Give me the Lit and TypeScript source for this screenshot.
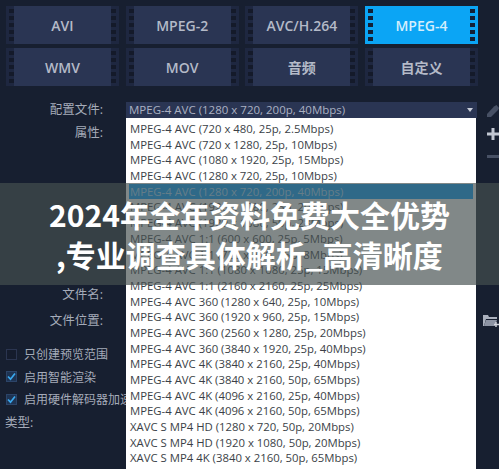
import { LitElement, html, css, svg } from "lit";
import { customElement } from "lit/decorators.js";

const TABS = ["AVI", "MPEG-2", "AVC/H.264", "MPEG-4", "WMV", "MOV", "音频", "自定义"];
const OPTIONS = [
  "MPEG-4 AVC (720 x 480, 25p, 2.5Mbps)",
  "MPEG-4 AVC (720 x 1280, 25p, 10Mbps)",
  "MPEG-4 AVC (1080 x 1920, 25p, 15Mbps)",
  "MPEG-4 AVC (1280 x 720, 25p, 10Mbps)",
  "MPEG-4 AVC (1280 x 720, 200p, 40Mbps)",
  "MPEG-4 AVC (1920 x 1080, 25p, 20Mbps)",
  "MPEG-4 AVC (1920 x 1080, 50p, 28Mbps)",
  "MPEG-4 AVC 1:1 (600 x 600, 25p, 5Mbps)",
  "MPEG-4 AVC 1:1 (720 x 720, 25p, 8Mbps)",
  "MPEG-4 AVC 1:1 (1080 x 1080, 25p, 15Mbps)",
  "MPEG-4 AVC 1:1 (2160 x 2160, 25p, 25Mbps)",
  "MPEG-4 AVC 360 (1280 x 640, 25p, 10Mbps)",
  "MPEG-4 AVC 360 (1920 x 960, 25p, 15Mbps)",
  "MPEG-4 AVC 360 (2560 x 1280, 25p, 20Mbps)",
  "MPEG-4 AVC 360 (3840 x 1920, 25p, 40Mbps)",
  "MPEG-4 AVC 4K (3840 x 2160, 25p, 40Mbps)",
  "MPEG-4 AVC 4K (3840 x 2160, 50p, 65Mbps)",
  "MPEG-4 AVC 4K (4096 x 2160, 25p, 40Mbps)",
  "MPEG-4 AVC 4K (4096 x 2160, 50p, 65Mbps)",
  "XAVC S MP4 HD (1280 x 720, 50p, 20Mbps)",
  "XAVC S MP4 HD (1920 x 1080, 50p, 20Mbps)",
  "XAVC S MP4 4K (3840 x 2160, 50p, 65Mbps)",
];
const CHECKS: [string, boolean][] = [
  ["只创建预览范围", false],
  ["启用智能渲染", true],
  ["启用硬件解码器加速", true],
];

@customElement("app-root")
export class AppRoot extends LitElement {
  static styles = css`
    :host {
      display: block;
      width: 499px;
      height: 469px;
      overflow: hidden;
      position: relative;
      background: #171f30;
      font-family: "Open Sans", "Noto Sans CJK SC", sans-serif;
      color: #b9bfcb;
    }
    .tabs {
      display: grid;
      grid-template-columns: repeat(4, 113px);
      grid-auto-rows: 38px;
      column-gap: 6.67px;
      row-gap: 4px;
      padding: 6px 0 0 6px;
    }
    .tab {
      display: flex;
      align-items: center;
      justify-content: center;
      background: #2a3553;
      color: #b4bac8;
      font-size: 14px;
      font-weight: 600;
      position: relative;
    }
    .tab.on { background: #0ba5f5; color: #d4eefc; }
    .perf {
      position: absolute;
      top: 0;
      bottom: 0;
      width: 8px;
      background-color: #1e2740;
      background-image: repeating-linear-gradient(transparent 0 3px, #141a2a 3px 7px);
      background-size: 5px 100%;
      background-repeat: no-repeat;
    }
    .tab.on .perf {
      background-color: #0ba5f5;
      background-image: repeating-linear-gradient(transparent 0 3px, #132036 3px 7px);
    }
    .perf.l { left: 0; background-position: 3px 0; }
    .perf.r { right: 0; background-position: 0 0; }
    .body {
      display: grid;
      grid-template-columns: 126px 351px 22px;
      padding-top: 16px;
    }
    .left { display: flex; flex-direction: column; }
    .lab {
      font-size: 12.5px;
      text-align: right;
      padding-right: 23px;
      height: 22px;
      line-height: 22px;
      color: #a5abb9;
    }
    .lab.first { margin-top: -3px; }
    .lab.attr { margin-top: 1px; }
    .lab.name { margin-top: 140px; }
    .lab.loc { margin-top: 4px; }
    .checks { display: flex; flex-direction: column; gap: 5.5px; margin-top: 13.5px; padding-left: 6px; }
    .check { display: flex; align-items: center; gap: 7px; height: 17px; font-size: 12px; white-space: nowrap; color: #a5abb9; }
    .box {
      flex: none;
      width: 9px;
      height: 9px;
      border: 1px solid #2b3550;
      background: #151c2d;
      display: flex;
      align-items: center;
      justify-content: center;
    }
    .box.on { background: #1e3352; border-color: #2c4468; }
    .box svg { display: block; }
    .type { font-size: 12.5px; color: #a5abb9; padding: 6px 0 0 5px; line-height: 17px; }
    .center { position: relative; z-index: 1; }
    .select {
      height: 16px;
      background: #2a3553;
      font-size: 11.5px;
      line-height: 16px;
      padding-left: 3px;
      color: #aab1c2;
      position: relative;
    }
    .arrow {
      position: absolute;
      right: 4px;
      top: 6px;
      width: 0;
      height: 0;
      border: 3px solid transparent;
      border-top: 4px solid #c8cdd8;
      border-bottom: 0;
    }
    .list {
      background: #fff;
      height: 352px;
      padding-top: 3px;
      box-sizing: border-box;
      margin-right: 1px;
    }
    .opt {
      height: 15.7px;
      line-height: 15.7px;
      font-size: 11.35px;
      color: #3b3f47;
      padding-left: 4px;
      white-space: nowrap;
    }
    .opt.sel { background: #00a0ff; color: #a8dcff; margin: 0 3px; padding-left: 1px; }
    .tools { position: relative; }
    .tools svg { position: absolute; display: block; }
    .banner {
      position: absolute;
      left: 0;
      right: 0;
      top: 183px;
      height: 102px;
      z-index: 2;
      background: rgba(70, 80, 80, 0.68);
      display: flex;
      flex-direction: column;
      justify-content: center;
      align-items: center;
      color: #fff;
      font-family: "Noto Sans CJK SC", sans-serif;
      font-weight: 700;
      font-size: 30px;
      line-height: 40px;
    }
    .banner div { white-space: nowrap; }
  `;

  render() {
    return html`
      <div class="tabs">
        ${TABS.map(
          (t) => html`<div class="tab ${t === "MPEG-4" ? "on" : ""}"><span class="perf l"></span>${t}<span class="perf r"></span></div>`
        )}
      </div>
      <div class="body">
        <div class="left">
          <div class="lab first">配置文件:</div>
          <div class="lab attr">属性:</div>
          <div class="lab name">文件名:</div>
          <div class="lab loc">文件位置:</div>
          <div class="checks">
            ${CHECKS.map(
              ([label, on]) => html`<div class="check">
                <span class="box ${on ? "on" : ""}">${on
                  ? svg`<svg width="9" height="9" viewBox="0 0 9 9"><path d="M1 4.5 3.5 7.2 8 1.5" fill="none" stroke="#3aa8ee" stroke-width="1.7"/></svg>`
                  : ""}</span>${label}
              </div>`
            )}
          </div>
          <div class="type">类型:</div>
        </div>
        <div class="center">
          <div class="select">MPEG-4 AVC (1280 x 720, 200p, 40Mbps)<span class="arrow"></span></div>
          <div class="list">
            ${OPTIONS.map(
              (o, i) => html`<div class="opt ${i === 4 ? "sel" : ""}">${o}</div>`
            )}
          </div>
        </div>
        <div class="tools">
          <svg style="left:10px;top:3px" width="12" height="12" viewBox="0 0 12 12"><path d="M0 12V9L7 1.5 9.5 0 12 3 11 5 4 12Z" fill="#475064"/></svg>
          <svg style="left:10px;top:26px" width="12" height="12" viewBox="0 0 12 12"><path d="M4.5 0h3v4.5H12v3H7.5V12h-3V7.5H0v-3h4.5Z" fill="#c2c7d2"/></svg>
          <svg style="left:10px;top:53px" width="12" height="3" viewBox="0 0 12 3"><path d="M0 0h12v3H0Z" fill="#475064"/></svg>
          <svg style="left:6px;top:212px" width="16" height="14" viewBox="0 0 16 14"><path d="M0 1h5l1 2h8v2H3L1 12H0Z" fill="#aab0bd"/><path d="M3 6h11l-2 6H1Z" fill="#8d94a4"/><path d="M13 8v5M11 10.5h5" stroke="#d5d8e0" stroke-width="1.4"/></svg>
        </div>
      </div>
      <div class="banner">
        <div>2024年全年资料免费大全优势</div>
        <div>,专业调查具体解析_高清晰度</div>
      </div>
    `;
  }
}
